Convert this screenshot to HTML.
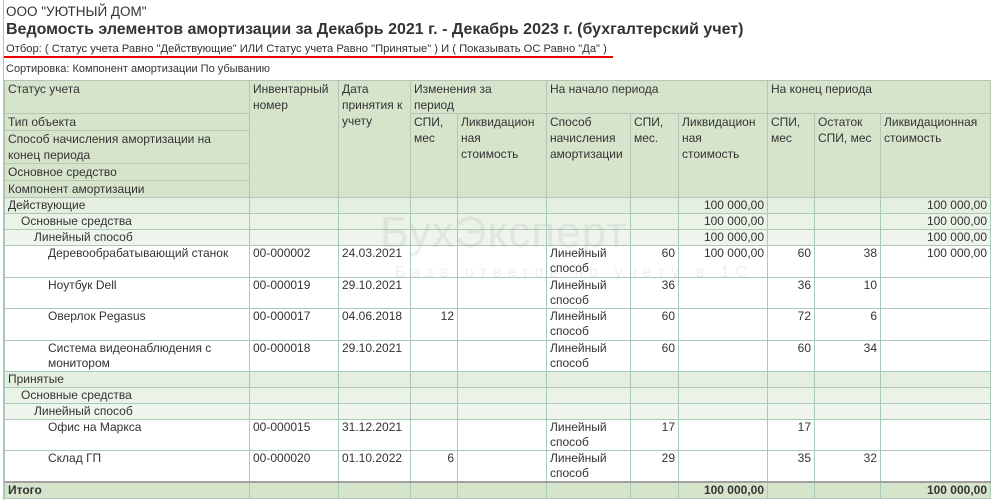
<!DOCTYPE html>
<html><head><meta charset="utf-8"><style>
body{margin:0;width:994px;height:500px;overflow:hidden;background:#fff;font-family:"Liberation Sans",sans-serif;color:#333;position:relative}
.t{position:absolute;left:6px;white-space:nowrap}
table{position:absolute;left:4px;top:80px;border-collapse:collapse;table-layout:fixed;font-size:12px;line-height:16px}
td{border:1px solid #a9c9ba;padding:0 3px;vertical-align:top;overflow:hidden;white-space:nowrap}
.h td{background:#d7e4cc;border-color:#b4c6b6;color:#333}
.d td{line-height:15px;padding-top:0}
.g1 td{background:#e5efdf;line-height:15px}.g2 td{background:#ebf2e6;line-height:15px}.g3 td{background:#eff5ec;line-height:15px}
.r{text-align:right}
.tot td{background:#d7e4cc;font-weight:bold;border-top:2px solid #a0a0a0;line-height:14px}
.wm{position:absolute;left:380px;top:208px;font-size:44px;color:rgba(150,150,150,0.15);white-space:nowrap;letter-spacing:1px}
.wm2{position:absolute;left:395px;top:264px;font-size:16px;color:rgba(150,150,150,0.15);letter-spacing:6px;white-space:nowrap}
</style></head><body>
<div style="position:absolute;left:3px;top:0;width:1px;height:500px;background:#bbb"></div>
<div class="t" style="top:4px;font-size:13.5px">ООО "УЮТНЫЙ ДОМ"</div>
<div class="t" style="top:21px;font-size:16px;font-weight:bold">Ведомость элементов амортизации за Декабрь 2021 г. - Декабрь 2023 г. (бухгалтерский учет)</div>
<div class="t" style="top:43px;font-size:11.2px">Отбор: ( Статус учета Равно "Действующие" ИЛИ Статус учета Равно "Принятые" ) И ( Показывать ОС Равно "Да" )</div>
<div style="position:absolute;left:4px;top:56px;width:609px;height:2px;background:#e00"></div>
<div class="t" style="top:63px;font-size:11px">Сортировка: Компонент амортизации По убыванию</div>
<table>
<colgroup><col style="width:245px"><col style="width:89px"><col style="width:72px"><col style="width:47px"><col style="width:89px"><col style="width:84px"><col style="width:48px"><col style="width:89px"><col style="width:47px"><col style="width:66px"><col style="width:110px"></colgroup>
<tr class="h" style="height:32px"><td>Статус учета</td><td rowspan="5">Инвентарный<br>номер</td><td rowspan="5">Дата<br>принятия к<br>учету</td><td colspan="2">Изменения за<br>период</td><td colspan="3">На начало периода</td><td colspan="3">На конец периода</td></tr>
<tr class="h" style="height:16px"><td>Тип объекта</td><td rowspan="4">СПИ,<br>мес</td><td rowspan="4">Ликвидацион<br>ная<br>стоимость</td><td rowspan="4">Способ<br>начисления<br>амортизации</td><td rowspan="4">СПИ,<br>мес.</td><td rowspan="4">Ликвидацион<br>ная<br>стоимость</td><td rowspan="4">СПИ,<br>мес</td><td rowspan="4">Остаток<br>СПИ, мес</td><td rowspan="4">Ликвидационная<br>стоимость</td></tr>
<tr class="h" style="height:33px"><td>Способ начисления амортизации на<br>конец периода</td></tr>
<tr class="h" style="height:16px"><td>Основное средство</td></tr>
<tr class="h" style="height:17px"><td>Компонент амортизации</td></tr>
<tr class="g1" style="height:16px"><td>Действующие</td><td></td><td></td><td></td><td></td><td></td><td></td><td class="r">100 000,00</td><td></td><td></td><td class="r">100 000,00</td></tr>
<tr class="g2" style="height:16px"><td style="padding-left:16px">Основные средства</td><td></td><td></td><td></td><td></td><td></td><td></td><td class="r">100 000,00</td><td></td><td></td><td class="r">100 000,00</td></tr>
<tr class="g3" style="height:16px"><td style="padding-left:29px">Линейный способ</td><td></td><td></td><td></td><td></td><td></td><td></td><td class="r">100 000,00</td><td></td><td></td><td class="r">100 000,00</td></tr>
<tr class="d" style="height:32px"><td style="padding-left:43px">Деревообрабатывающий станок</td><td>00-000002</td><td>24.03.2021</td><td></td><td></td><td>Линейный<br>способ</td><td class="r">60</td><td class="r">100 000,00</td><td class="r">60</td><td class="r">38</td><td class="r">100 000,00</td></tr>
<tr class="d" style="height:31px"><td style="padding-left:43px">Ноутбук Dell</td><td>00-000019</td><td>29.10.2021</td><td></td><td></td><td>Линейный<br>способ</td><td class="r">36</td><td></td><td class="r">36</td><td class="r">10</td><td></td></tr>
<tr class="d" style="height:32px"><td style="padding-left:43px">Оверлок Pegasus</td><td>00-000017</td><td>04.06.2018</td><td class="r">12</td><td></td><td>Линейный<br>способ</td><td class="r">60</td><td></td><td class="r">72</td><td class="r">6</td><td></td></tr>
<tr class="d" style="height:31px"><td style="padding-left:43px">Система видеонаблюдения с<br>монитором</td><td>00-000018</td><td>29.10.2021</td><td></td><td></td><td>Линейный<br>способ</td><td class="r">60</td><td></td><td class="r">60</td><td class="r">34</td><td></td></tr>
<tr class="g1" style="height:16px"><td>Принятые</td><td></td><td></td><td></td><td></td><td></td><td></td><td></td><td></td><td></td><td></td></tr>
<tr class="g2" style="height:16px"><td style="padding-left:16px">Основные средства</td><td></td><td></td><td></td><td></td><td></td><td></td><td></td><td></td><td></td><td></td></tr>
<tr class="g3" style="height:16px"><td style="padding-left:29px">Линейный способ</td><td></td><td></td><td></td><td></td><td></td><td></td><td></td><td></td><td></td><td></td></tr>
<tr class="d" style="height:31px"><td style="padding-left:43px">Офис на Маркса</td><td>00-000015</td><td>31.12.2021</td><td></td><td></td><td>Линейный<br>способ</td><td class="r">17</td><td></td><td class="r">17</td><td></td><td></td></tr>
<tr class="d" style="height:31px"><td style="padding-left:43px">Склад ГП</td><td>00-000020</td><td>01.10.2022</td><td class="r">6</td><td></td><td>Линейный<br>способ</td><td class="r">29</td><td></td><td class="r">35</td><td class="r">32</td><td></td></tr>
<tr class="tot" style="height:16px"><td>Итого</td><td></td><td></td><td></td><td></td><td></td><td></td><td class="r">100 000,00</td><td></td><td></td><td class="r">100 000,00</td></tr>
</table>
<div class="wm">БухЭксперт</div>
<div class="wm2">База ответов по учёту в 1С</div>
</body></html>
